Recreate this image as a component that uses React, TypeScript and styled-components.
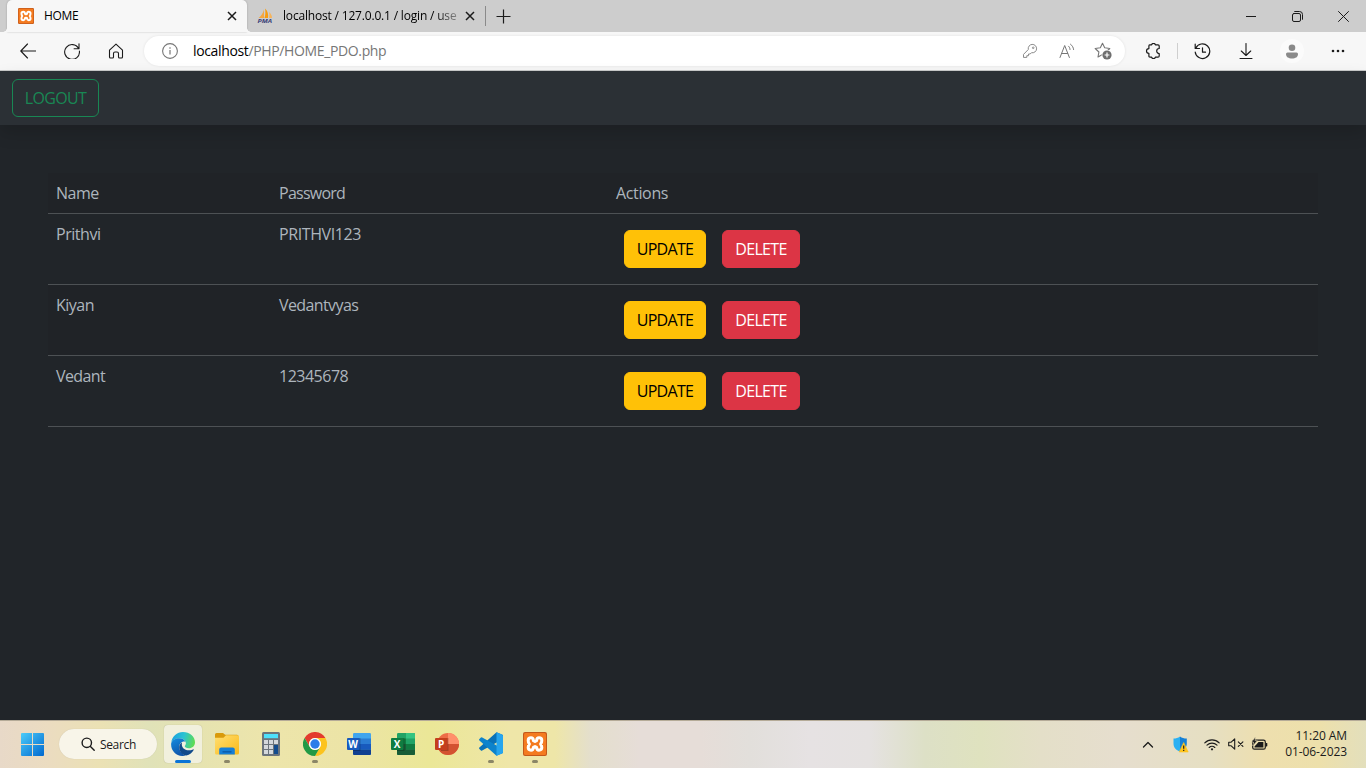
import React from "react";
import styled, { createGlobalStyle, css } from "styled-components";

const Global = createGlobalStyle`
  * { box-sizing: border-box; }
  html, body { margin: 0; padding: 0; overflow: hidden; }
  body { font-family: "Open Sans", "Noto Sans", sans-serif; }
  svg { display: block; flex: none; }
`;

const Screen = styled.div`
  width: 1366px;
  height: 768px;
  display: flex;
  flex-direction: column;
  background: #212529;
  overflow: hidden;
`;

/* ---------- browser chrome ---------- */
const TabStrip = styled.div`
  height: 32px;
  display: flex;
  background: #cdcdcd;
  padding-left: 7px;
  flex: none;
`;

const Tab = styled.div<{ $active?: boolean }>`
  position: relative;
  width: ${(p) => (p.$active ? 240 : 238)}px;
  display: flex;
  align-items: center;
  padding: 0 10px 0 ${(p) => (p.$active ? 11 : 10)}px;
  ${(p) =>
    p.$active &&
    css`
      background: #f7f7f7;
      border-radius: 5px 5px 0 0;
      box-shadow: 0 0 2px rgba(0, 0, 0, 0.25);
      &::before,
      &::after {
        content: "";
        position: absolute;
        bottom: 0;
        width: 4px;
        height: 4px;
      }
      &::before {
        left: -4px;
        background: radial-gradient(circle at 0 0, transparent 3.5px, #f7f7f7 4px);
      }
      &::after {
        right: -4px;
        background: radial-gradient(circle at 4px 0, transparent 3.5px, #f7f7f7 4px);
      }
    `}
`;

const TabTitle = styled.span<{ $spacing: number; $fade?: boolean }>`
  flex: 1;
  margin-left: 10px;
  font-size: 12px;
  line-height: 16px;
  letter-spacing: ${(p) => p.$spacing}px;
  color: #000;
  white-space: nowrap;
  ${(p) =>
    p.$fade &&
    css`
      mask-image: linear-gradient(90deg, #000 152px, rgba(0, 0, 0, 0.25) 176px);
    `}
`;

const TabDivider = styled.div`
  width: 1px;
  height: 20px;
  margin-top: 6px;
  background: #8a8a8a;
`;

const NewTab = styled.div`
  width: 35px;
  display: flex;
  align-items: center;
  justify-content: center;
`;

const WindowControls = styled.div`
  display: flex;
  margin-left: auto;
`;

const WindowButton = styled.div`
  width: 46px;
  display: flex;
  align-items: center;
  justify-content: center;
`;

const Toolbar = styled.div`
  height: 39px;
  flex: none;
  display: flex;
  align-items: center;
  padding-left: 6px;
  background: #f7f7f7;
  border-bottom: 1px solid #c9caca;
`;

const ToolSlot = styled.div<{ $w: number; $left?: number }>`
  width: ${(p) => p.$w}px;
  height: 100%;
  padding-left: ${(p) => p.$left ?? 0}px;
  display: flex;
  align-items: center;
  justify-content: center;
`;

const AddressBar = styled.div`
  width: 981px;
  height: 30px;
  margin-left: 6px;
  padding: 0 5px 0 17px;
  display: flex;
  align-items: center;
  background: #fff;
  border-radius: 15px;
  box-shadow: 0 0 3px rgba(0, 0, 0, 0.09);
`;

const Url = styled.span`
  flex: 1;
  margin-left: 14px;
  font-size: 14px;
  line-height: 20px;
  letter-spacing: -0.36px;
  color: #767676;
  b {
    font-weight: 400;
    color: #000;
  }
`;

const ToolDivider = styled.div`
  width: 1px;
  height: 16px;
  background: #cfcfcf;
`;

const Avatar = styled.div`
  width: 24px;
  height: 24px;
  border-radius: 50%;
  background: #fbfbfb;
  display: flex;
  align-items: center;
  justify-content: center;
`;

/* ---------- web page ---------- */
const Page = styled.main`
  height: 649px;
  flex: none;
  background: #212529;
`;

const Navbar = styled.nav`
  height: 54px;
  padding: 8px 12px;
  background: #2b3035;
  box-shadow: 0 8px 16px rgba(0, 0, 0, 0.15);
`;

const Button = styled.button<{ $kind: "outline" | "warning" | "danger"; $w: number }>`
  width: ${(p) => p.$w}px;
  height: 38px;
  padding: 0;
  border-radius: 6px;
  border: 1px solid;
  font: 400 16px/24px "Open Sans", "Noto Sans", sans-serif;
  white-space: nowrap;
  ${(p) =>
    p.$kind === "outline" &&
    css`
      color: #198754;
      border-color: #198754;
      background: transparent;
      letter-spacing: -0.65px;
    `}
  ${(p) =>
    p.$kind === "warning" &&
    css`
      color: #000;
      border-color: #ffc107;
      background: #ffc107;
      letter-spacing: -0.7px;
    `}
  ${(p) =>
    p.$kind === "danger" &&
    css`
      color: #fff;
      border-color: #dc3545;
      background: #dc3545;
      letter-spacing: -0.65px;
    `}
`;

const Table = styled.table`
  width: 1270px;
  margin: 48px 48px 0;
  border-collapse: collapse;
  table-layout: fixed;
  color: #adb5bd;
  font-size: 16px;
  line-height: 24px;
`;

const Row = styled.tr<{ $striped?: boolean }>`
  background: ${(p) => (p.$striped ? "#202327" : "#212529")};
  border-bottom: 1px solid #4d5154;
`;

const Cell = styled.td<{ $spacing?: number }>`
  padding: 8px;
  vertical-align: top;
  text-align: left;
  font-weight: 400;
  letter-spacing: ${(p) => p.$spacing ?? 0}px;
`;

const Actions = styled.div`
  display: flex;
  gap: 16px;
  padding: 8px;
`;

/* ---------- taskbar ---------- */
const Taskbar = styled.footer`
  height: 48px;
  flex: none;
  display: flex;
  align-items: center;
  padding: 0 19px 1px 10px;
  border-top: 1px solid #b5ab98;
  background: linear-gradient(
    90deg,
    #e8d9c8 0,
    #ebdcc0 50px,
    #ebe1b4 100px,
    #e0e2b8 150px,
    #e6e3b0 200px,
    #ede5ab 270px,
    #ece4a6 350px,
    #ebe797 430px,
    #efe6a8 510px,
    #eee6a8 555px,
    #e4dfcc 590px,
    #e6ddd8 640px,
    #e6ddd8 700px,
    #e2dfdb 750px,
    #e6e2e3 810px,
    #e5e2e1 870px,
    #dde0c6 925px,
    #dfe2bf 980px,
    #e4dfc8 1040px,
    #e6dece 1120px,
    #e6dfc2 1210px,
    #eedfae 1265px,
    #ede0ab 1320px,
    #e3dfbc 1366px
  );
`;

const AppSlot = styled.div<{ $active?: boolean }>`
  width: 38px;
  height: 38px;
  margin: 0 3px;
  border-radius: 4px;
  display: flex;
  flex-direction: column;
  align-items: center;
  padding-top: 7px;
  ${(p) =>
    p.$active &&
    css`
      background: #f1f0dd;
      box-shadow: 0 0 1px rgba(0, 0, 0, 0.25);
    `}
`;

const Indicator = styled.div<{ $active?: boolean }>`
  width: ${(p) => (p.$active ? 16 : 6)}px;
  height: 3px;
  margin-top: 4px;
  border-radius: 2px;
  background: ${(p) => (p.$active ? "#0a74d6" : "#8b8667")};
`;

const SearchPill = styled.div`
  width: 98px;
  height: 30px;
  margin: 0 4px 0 5px;
  padding-left: 22px;
  display: flex;
  align-items: center;
  gap: 5px;
  border-radius: 15px;
  background: #f8f5e9;
  box-shadow: 0 0 1px rgba(0, 0, 0, 0.15);
  font-size: 12px;
  letter-spacing: -0.35px;
  color: #1b1b1b;
`;

const Tray = styled.div`
  margin-left: auto;
  display: flex;
  align-items: center;
`;

const TraySlot = styled.div<{ $w: number; $left?: number }>`
  width: ${(p) => p.$w}px;
  padding-left: ${(p) => p.$left ?? 0}px;
  display: flex;
  justify-content: center;
`;

const Clock = styled.div`
  width: 75px;
  margin-top: -1px;
  display: flex;
  flex-direction: column;
  align-items: flex-end;
  font-size: 12px;
  line-height: 16px;
  letter-spacing: -0.08px;
  color: #1b1b1b;
  white-space: nowrap;
`;

/* ---------- icons ---------- */
const Xampp = ({ size }: { size: number }) => (
  <svg width={size} height={size} viewBox="0 0 24 24">
    <rect width="24" height="24" rx="2" fill="#c4581a" />
    <rect x="1" y="1" width="22" height="22" rx="1.5" fill="#f47b20" />
    <path
      d="M8 5.800Q5.200 5.800 5.200 8.400 5.200 10.500 6.400 12 5.200 13.500 5.200 15.600 5.200 18.200 8 18.200 10.200 18.200 10.400 15.400L12 14.600 13.600 15.400Q13.800 18.200 16 18.200 18.800 18.200 18.800 15.600 18.800 13.500 17.600 12 18.800 10.500 18.800 8.400 18.800 5.800 16 5.800 13.800 5.800 13.600 8.600L12 9.400 10.400 8.600Q10.200 5.800 8 5.800z"
      fill="none"
      stroke="#fff"
      strokeWidth="3"
      strokeLinejoin="round"
    />
  </svg>
);

const Pma = () => (
  <svg width="16" height="16" viewBox="0 0 16 16">
    <path d="M7 1.500V10H1.500C4 8 6 5.500 7 1.500z" fill="#f6a841" />
    <path d="M8 .5c3 2.500 3.500 6 3 9.500H7.500c1-3 1.200-6 .5-9.500z" fill="#f89c0e" />
    <path d="M12 4c2 1.500 3 3.500 3 6h-3c.6-2 .6-4 0-6z" fill="#f6b45c" />
    <text x=".5" y="15" fontSize="5.500" fontWeight="700" fontStyle="italic" textLength="14.500" lengthAdjust="spacingAndGlyphs" fill="#3b3f78" fontFamily="Open Sans, sans-serif">
      PMA
    </text>
  </svg>
);

const Line = ({
  w = 16,
  h,
  d,
  c = "#1b1b1b",
  sw = 1.1,
  cap = "round",
}: {
  w?: number;
  h?: number;
  d: string;
  c?: string;
  sw?: number;
  cap?: "round" | "butt";
}) => (
  <svg width={w} height={h ?? w} viewBox={`0 0 ${w} ${h ?? w}`} fill="none" stroke={c} strokeWidth={sw} strokeLinecap={cap} strokeLinejoin="round">
    <path d={d} />
  </svg>
);

const ReadAloud = () => (
  <svg width="16" height="16" viewBox="0 0 16 16" fill="none" stroke="#767676" strokeLinecap="round" strokeLinejoin="round">
    <path d="M1 14.500 5.700 2.500l4.700 12M2.700 10.500h6" />
    <path d="M9.500 3.200c1 .9 1.500 2 1.500 3.300M11.500 1.200c1.900 1.500 2.900 3.300 3.100 5.300" />
  </svg>
);

const StarPlus = () => (
  <svg width="18" height="18" viewBox="0 0 18 18">
    <path d="M8.500 1.200l2.200 4.600 5.100.7-3.700 3.500.9 5-4.500-2.400L4 15l.9-5L1.200 6.500l5.100-.7z" fill="none" stroke="#767676" strokeWidth="1.100" strokeLinejoin="round" />
    <circle cx="13" cy="13" r="5.300" fill="#fff" />
    <circle cx="13" cy="13" r="4.600" fill="#6e6e6e" />
    <path d="M13 10.600v4.800M10.600 13h4.800" stroke="#fff" strokeWidth="1.200" />
  </svg>
);

const Windows = () => (
  <svg width="24" height="24" viewBox="0 0 24 24">
    <defs>
      <linearGradient id="win" gradientUnits="userSpaceOnUse" x1="0" y1="0" x2="24" y2="24">
        <stop offset="0" stopColor="#4fd0fb" />
        <stop offset="1" stopColor="#0068cf" />
      </linearGradient>
    </defs>
    <path d="M2 1h10v11H1V2Q1 1 2 1zM13 1h10q1 0 1 1v10H13zM1 13h11v11H2q-1 0-1-1zM13 13h11v10q0 1-1 1H13z" fill="url(#win)" />
  </svg>
);

const Edge = () => (
  <svg width="24" height="24" viewBox="0 0 24 24">
    <defs>
      <linearGradient id="edgeTop" x1="0" y1=".3" x2="1" y2=".5">
        <stop offset="0" stopColor="#1a9fe0" />
        <stop offset=".5" stopColor="#2bc3d2" />
        <stop offset="1" stopColor="#5fdc52" />
      </linearGradient>
      <linearGradient id="edgeSide" x1="0" y1="0" x2=".4" y2="1">
        <stop offset="0" stopColor="#168de0" />
        <stop offset="1" stopColor="#0f56ab" />
      </linearGradient>
    </defs>
    <path d="M.3 10.500C1 4.200 6 0 12 0c6.700 0 12 4.700 12 10.200 0 3.700-2.700 6-6.100 6-2.700 0-4.100-1-4.100-1.900 0-.8 1.100-1.200 1.100-3 0-2-2-5-6.500-5-4.200 0-7 2.400-8.100 4.200z" fill="url(#edgeTop)" />
    <path d="M.1 12C.3 8.500 4 6.200 8 6.200c3.500 0 5.700 1.700 6.500 3.500C10.500 9 8.200 12 8.200 15c0 4 3 7 6.500 8.600C7 25.600 0 20 .1 12z" fill="url(#edgeSide)" />
    <path d="M11 10.500C9.200 11.500 8.200 13 8.200 15.200c0 4.300 3.300 8.200 7.100 8.300 3.500-.8 6-3 7.400-5.500.3-.6-.2-.9-.7-.6-6 2.600-12.500-.5-11-6.900z" fill="#114a8b" />
  </svg>
);

const Folder = () => (
  <svg width="24" height="24" viewBox="0 0 24 24">
    <defs>
      <linearGradient id="fold" x1="0" y1="0" x2="1" y2="1">
        <stop offset="0" stopColor="#ffdf72" />
        <stop offset="1" stopColor="#fbb917" />
      </linearGradient>
    </defs>
    <path d="M0 2.500Q0 1 1.500 1H8l2.200 1.800H22q1.500 0 1.500 1.500V8H0z" fill="#d99a0b" />
    <path d="M0 5.800h8.500L11 3.200h11.500Q24 3.200 24 4.700V21q0 1.500-1.500 1.500h-21Q0 22.500 0 21z" fill="url(#fold)" />
    <path d="M4.200 22.500V17.500q0-2 2-2h11.600q2 0 2 2v5z" fill="#167fd6" />
    <path d="M7.500 19.200h9v1.300h-9z" fill="#0b58a4" />
  </svg>
);

const Calculator = () => (
  <svg width="24" height="24" viewBox="0 0 24 24">
    <rect x="3" y="0" width="18" height="24" rx="1.500" fill="#6b747c" />
    <rect x="5" y="2" width="14" height="4.200" fill="#4ee0fb" />
    <path d="M5 8h4v4H5zM10 8h4v4h-4zM15 8h4v4h-4zM5 13h4v4H5zM10 13h4v4h-4zM5 18h4v4H5zM10 18h4v4h-4z" fill="#d4d8dc" />
    <rect x="15" y="13" width="4" height="9" fill="#124b8d" />
  </svg>
);

const Chrome = () => (
  <svg width="24" height="24" viewBox="0 0 24 24">
    <path d="M1.600 6A12 12 0 0 1 22.400 6H12a6 6 0 0 0-5.200 9z" fill="#e33b2e" />
    <path d="M22.400 6A12 12 0 0 1 12 24l5.200-9A6 6 0 0 0 12 6z" fill="#fcc31e" />
    <path d="M12 24A12 12 0 0 1 1.600 6l5.200 9a6 6 0 0 0 10.400 0z" fill="#229a45" />
    <circle cx="12" cy="12" r="6" fill="#fff" />
    <circle cx="12" cy="12" r="4.700" fill="#2b7de9" />
  </svg>
);

const Office = ({ letter, bands, badge }: { letter: string; bands: string[]; badge: string }) => (
  <svg width="24" height="24" viewBox="0 0 24 24">
    {letter === "P" ? (
      <>
        <circle cx="13" cy="12" r="11" fill={bands[0]} />
        <path d="M13 1a11 11 0 0 1 11 11H13z" fill={bands[1]} />
        <path d="M2 12h22a11 11 0 0 1-22 0z" fill={bands[2]} />
      </>
    ) : letter === "X" ? (
      <>
        <rect x="6" y="1" width="18" height="22" rx="1.200" fill={bands[0]} />
        <path d="M15 1h7.800Q24 1 24 2.200V6.500h-9z" fill={bands[1]} />
        <path d="M6 6.500h9V12H6z" fill={bands[2]} />
        <path d="M15 12h9v5.500h-9z" fill={bands[2]} />
        <path d="M6 12h9v5.500h9v4.300q0 1.200-1.200 1.200H7.200Q6 23 6 21.800z" fill={bands[3]} />
      </>
    ) : (
      <>
        <rect x="6" y="1" width="18" height="22" rx="1.200" fill={bands[0]} />
        <path d="M6 6.500h18V12H6z" fill={bands[1]} />
        <path d="M6 12h18v5.500H6z" fill={bands[2]} />
        <path d="M6 17.500h18v4.300q0 1.200-1.200 1.200H7.200Q6 23 6 21.800z" fill={bands[3]} />
      </>
    )}
    <path d="M6 6h7.500v13H6z" fill="#000" opacity=".22" />
    <rect x="0" y="6" width="12.500" height="12" rx="1" fill={badge} />
    <text x="6.200" y="15.600" textAnchor="middle" fontFamily="Open Sans, sans-serif" fontSize="10" fontWeight="700" fill="#fff">
      {letter}
    </text>
  </svg>
);

const VsCode = () => (
  <svg width="24" height="24" viewBox="0 0 24 24">
    <path d="M17.500.3 24 3v4L3.200 18.600q-.7.400-1.300-.1L.4 17q-.7-.7 0-1.400z" fill="#0a72b8" />
    <path d="M17.500 23.700 24 21v-4L3.200 5.400q-.7-.4-1.300.1L.4 7q-.7.700 0 1.400z" fill="#0d83cc" />
    <path d="M17.500.3 23 2.500q1 .5 1 1.500v16q0 1-1 1.500l-5.500 2.300z" fill="#27a5ee" />
  </svg>
);

const Shield = () => (
  <svg width="16" height="17" viewBox="0 0 16 17">
    <path d="M7 .5C5 2 3 2.600.5 2.600V7.500c0 4 2.500 6.500 6.500 8.300z" fill="#2bb0f2" />
    <path d="M7 .5c2 1.500 4 2.100 6.800 2.100V7.500c0 4-2.800 6.500-6.800 8.300z" fill="#1580d6" />
    <path d="M10.700 6.500 15.200 16H6.200z" fill="#ffc51d" stroke="#ffc51d" strokeWidth=".6" strokeLinejoin="round" />
    <path d="M10.700 9.500v3.300M10.700 13.800v1.300" stroke="#222" strokeWidth="1.200" />
  </svg>
);

const Wifi = () => (
  <svg width="16" height="13" viewBox="0 0 16 13" fill="none" stroke="#1b1b1b" strokeLinecap="round">
    <path d="M.8 4.800a10.200 10.200 0 0 1 14.400 0M3 7.200a7.100 7.100 0 0 1 10 0M5.200 9.500a4 4 0 0 1 5.600 0" strokeWidth="1.150" />
    <circle cx="8" cy="11.300" r="1.100" fill="#1b1b1b" stroke="none" />
  </svg>
);

const Battery = () => (
  <svg width="17" height="14" viewBox="0 0 17 14">
    <rect x="1.700" y="3.200" width="12.600" height="9" rx="1.800" fill="none" stroke="#1b1b1b" strokeWidth="1.200" />
    <path d="M14.800 6h.9q.6 0 .6.600v2.200q0 .6-.6.600h-.9z" fill="#1b1b1b" />
    <path d="M7.500 5h4.900v5.500H3.500V9.500z" fill="#1b1b1b" />
    <path d="M4.300 0 .6 5.200h2L1.700 9 6.300 3.700H4z" fill="#1b1b1b" stroke="#eadfb6" strokeWidth=".5" />
  </svg>
);

const users = [
  { name: "Prithvi", password: "PRITHVI123", ns: -0.45, ps: -0.4 },
  { name: "Kiyan", password: "Vedantvyas", ns: -0.5, ps: -0.6 },
  { name: "Vedant", password: "12345678", ns: -0.6, ps: -0.5 },
];

export default function App() {
  return (
    <Screen>
      <Global />
      <TabStrip>
        <Tab $active>
          <Xampp size={16} />
          <TabTitle $spacing={-0.3}>HOME</TabTitle>
          <Line w={10} d="M1 1l8 8M9 1 1 9" sw={1.5} cap="butt" />
        </Tab>
        <Tab>
          <Pma />
          <TabTitle $spacing={-0.18} $fade>
            localhost / 127.0.0.1 / login / use
          </TabTitle>
          <Line w={10} d="M1 1l8 8M9 1 1 9" sw={1.5} cap="butt" />
        </Tab>
        <TabDivider />
        <NewTab>
          <Line w={15} d="M7.500.5v14M.5 7.500h14" sw={1.2} cap="butt" />
        </NewTab>
        <WindowControls>
          <WindowButton>
            <Line w={10} d="M0 5.500h10" sw={1} cap="butt" />
          </WindowButton>
          <WindowButton>
            <Line w={11} d="M2 2.500h5Q8.500 2.500 8.500 4v5Q8.500 10.500 7 10.500H2Q.5 10.500.5 9V4Q.5 2.500 2 2.500zM2.700.5H7.500q3 0 3 3v4.800" sw={1} />
          </WindowButton>
          <WindowButton>
            <Line w={11} d="M.5.5l10 10M10.500.5l-10 10" sw={1} />
          </WindowButton>
        </WindowControls>
      </TabStrip>

      <Toolbar>
        <ToolSlot $w={44}>
          <Line w={16} d="M7.500 1 .8 8l6.700 7M.8 8H16" />
        </ToolSlot>
        <ToolSlot $w={44}>
          <Line w={16} d="M14.600 5.500A7.400 7.400 0 1 0 15.400 8M15 .8v4.900h-4.900" />
        </ToolSlot>
        <ToolSlot $w={44}>
          <Line w={16} d="M1.500 7.200 8 1.200l6.500 6V14q0 1-1 1h-2q-1 0-1-1v-3.500Q10.500 9 9 9H7Q5.500 9 5.500 10.500V14q0 1-1 1h-2q-1 0-1-1z" />
        </ToolSlot>
        <AddressBar>
          <svg width="18" height="18" viewBox="0 0 18 18" fill="none" stroke="#767676">
            <circle cx="9" cy="9" r="7.400" strokeWidth="1.100" />
            <path d="M9 8v4.500M9 5.300v1.400" strokeWidth="1.200" />
          </svg>
          <Url>
            <b>localhost</b>/PHP/HOME_PDO.php
          </Url>
          <ToolSlot $w={36}>
            <svg width="16" height="16" viewBox="0 0 16 16" fill="none" stroke="#8a8a8a" strokeLinejoin="round">
              <path d="M6.300 6.500a4.200 4.200 0 1 1 3.200 3.200L8.200 11H6.500v1.700H4.800v1.700H1.500v-3z" />
              <circle cx="11.200" cy="4.800" r=".8" />
            </svg>
          </ToolSlot>
          <ToolSlot $w={36} $left={1}>
            <ReadAloud />
          </ToolSlot>
          <ToolSlot $w={36} $left={1}>
            <StarPlus />
          </ToolSlot>
        </AddressBar>
        <ToolSlot $w={52} $left={3}>
          <Line
            w={16}
            d="M4 2.500Q4 1.800 5 1.800H6.600a2 2 0 0 1 3.800 0H13q1.200 0 1.200 1.200V5.500a2.100 2.100 0 0 0 0 5V13q0 1.200-1.200 1.200h-2.600a2 2 0 0 1-3.800 0H5Q3.900 14.200 3.900 13v-2.600a2.400 2.400 0 1 1 0-4.800V3z"
            sw={1.2}
          />
        </ToolSlot>
        <ToolDivider />
        <ToolSlot $w={48}>
          <Line w={17} d="M1.800 5.200A7.300 7.300 0 1 1 1.200 9M1.200 1.200v4.300h4.300M8.500 4.800v4.400h3" sw={1.2} />
        </ToolSlot>
        <ToolSlot $w={40}>
          <Line w={14} h={16} d="M7 .5v12M2.300 8 7 12.500 11.700 8M1 15.500h12" />
        </ToolSlot>
        <ToolSlot $w={52}>
          <Avatar>
            <svg width="12" height="15" viewBox="0 0 12 15" fill="#8a8a8a">
              <circle cx="6" cy="3.800" r="3.300" />
              <path d="M1.500 8.500h9Q12 8.500 12 10c0 3-2.500 4.500-6 4.500S0 13 0 10Q0 8.500 1.500 8.500z" />
            </svg>
          </Avatar>
        </ToolSlot>
        <ToolSlot $w={40}>
          <svg width="14" height="4" viewBox="0 0 14 4" fill="#1b1b1b">
            <circle cx="2" cy="2" r="1.300" />
            <circle cx="7" cy="2" r="1.300" />
            <circle cx="12" cy="2" r="1.300" />
          </svg>
        </ToolSlot>
      </Toolbar>

      <Page>
        <Navbar>
          <Button $kind="outline" $w={87}>
            LOGOUT
          </Button>
        </Navbar>
        <Table>
          <colgroup>
            <col style={{ width: 223 }} />
            <col style={{ width: 337 }} />
            <col />
          </colgroup>
          <thead>
            <Row $striped>
              <Cell as="th" $spacing={-0.5}>Name</Cell>
              <Cell as="th" $spacing={-0.75}>Password</Cell>
              <Cell as="th" $spacing={-0.35}>Actions</Cell>
            </Row>
          </thead>
          <tbody>
            {users.map((u, i) => (
              <Row key={u.name} $striped={i % 2 === 1}>
                <Cell $spacing={u.ns}>{u.name}</Cell>
                <Cell $spacing={u.ps}>{u.password}</Cell>
                <Cell>
                  <Actions>
                    <Button $kind="warning" $w={82}>UPDATE</Button>
                    <Button $kind="danger" $w={78}>DELETE</Button>
                  </Actions>
                </Cell>
              </Row>
            ))}
          </tbody>
        </Table>
      </Page>

      <Taskbar>
        <AppSlot>
          <Windows />
        </AppSlot>
        <SearchPill>
          <Line w={14} d="M10.500 5.800a4.700 4.700 0 1 1-9.400 0 4.700 4.700 0 0 1 9.400 0zM9.200 9.200l4 4" sw={1.4} />
          Search
        </SearchPill>
        <AppSlot $active>
          <Edge />
          <Indicator $active />
        </AppSlot>
        <AppSlot>
          <Folder />
          <Indicator />
        </AppSlot>
        <AppSlot>
          <Calculator />
        </AppSlot>
        <AppSlot>
          <Chrome />
          <Indicator />
        </AppSlot>
        <AppSlot>
          <Office letter="W" bands={["#41a5ee", "#2b7cd3", "#185abd", "#103f91"]} badge="#185abd" />
        </AppSlot>
        <AppSlot>
          <Office letter="X" bands={["#21a366", "#33c481", "#107c41", "#185c37"]} badge="#107c41" />
        </AppSlot>
        <AppSlot>
          <Office letter="P" bands={["#ed6c47", "#ff8f6b", "#d35230"]} badge="#c43e1c" />
        </AppSlot>
        <AppSlot>
          <VsCode />
          <Indicator />
        </AppSlot>
        <AppSlot>
          <Xampp size={24} />
          <Indicator />
        </AppSlot>
        <Tray>
          <TraySlot $w={32}>
            <Line w={12} h={7} d="M1.500 6 6 1.500 10.500 6" sw={1.3} />
          </TraySlot>
          <TraySlot $w={32} $left={2}>
            <Shield />
          </TraySlot>
          <TraySlot $w={32}>
            <Wifi />
          </TraySlot>
          <TraySlot $w={16}>
            <Line w={16} h={12} d="M.7 4.200h2.500L6.700.8v10.400L3.200 7.800H.7zM10.300 3.800l4.600 4.600M14.900 3.800l-4.600 4.600" />
          </TraySlot>
          <TraySlot $w={28} $left={2}>
            <Battery />
          </TraySlot>
          <Clock>
            <span>11:20 AM</span>
            <span>01-06-2023</span>
          </Clock>
        </Tray>
      </Taskbar>
    </Screen>
  );
}
